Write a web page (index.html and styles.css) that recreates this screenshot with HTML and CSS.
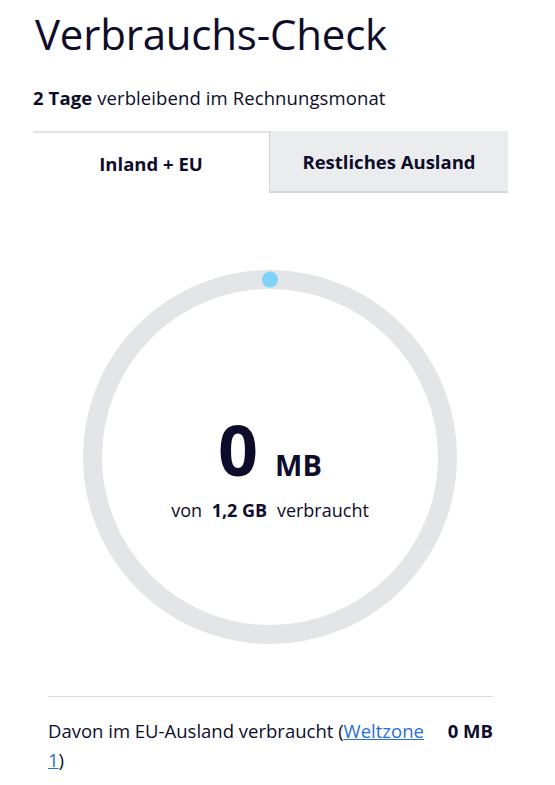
FILE: index.html
```html
<!DOCTYPE html>
<html lang="de">
<head>
<meta charset="utf-8">
<link rel="stylesheet" href="styles.css">
</head>
<body>
<main class="page">
  <h1 class="title">Verbrauchs-Check</h1>
  <p class="remaining"><strong>2 Tage</strong> verbleibend im Rechnungsmonat</p>
  <div class="tabs">
    <div class="tab tab-active">Inland + EU</div>
    <div class="tab tab-inactive">Restliches Ausland</div>
  </div>
  <div class="gauge">
    <svg class="ring" width="374" height="374" viewBox="0 0 374 374">
      <circle cx="187" cy="187" r="177.5" fill="none" stroke="#e4e5e7" stroke-width="19"/>
      <circle cx="187" cy="9.5" r="8" fill="#7dd3f7"/>
    </svg>
    <div class="gauge-text">
      <div class="amount"><span class="num">0</span><span class="unit">MB</span></div>
      <div class="of">von <strong>1,2 GB</strong> verbraucht</div>
    </div>
  </div>
  <div class="detail">
    <div class="detail-row">
      <span class="detail-label">Davon im EU-Ausland verbraucht (<a href="#">Weltzone 1</a>)</span>
      <strong class="detail-value">0 MB</strong>
    </div>
  </div>
</main>
</body>
</html>
```
FILE: styles.css
```css
* { box-sizing: border-box; }
body {
  margin: 0;
  background: #fff;
  color: #0d0d2b;
  font-family: "Open Sans", "Noto Sans", sans-serif;
}
.page {
  width: 475px;
  margin-left: 33px;
  padding-top: 8px;
}
.title {
  margin: 0 0 0 2px;
  font-size: 42px;
  font-weight: 400;
  line-height: 52px;
  letter-spacing: -0.2px;
}
.remaining {
  margin: 25px 0 0 0;
  font-size: 18.5px;
  line-height: 26px;
  letter-spacing: 0.1px;
}
.remaining strong { font-weight: 700; }
.tabs {
  margin-top: 20px;
  display: flex;
  height: 62px;
}
.tab {
  flex: 1;
  display: flex;
  align-items: center;
  justify-content: center;
  font-size: 18.5px;
  font-weight: 700;
}
.tab-active {
  border-top: 2px solid #e1e2e4;
  width: 236px;
  flex: none;
}
.tab-inactive {
  background: #ebecee;
  border-left: 1px solid #d6d7d9;
  border-bottom: 2px solid #d6d7d9;
}
.gauge {
  position: relative;
  margin: 77px 0 0 50px;
  width: 374px;
  height: 374px;
}
.ring { display: block; }
.gauge-text {
  position: absolute;
  inset: 0;
  display: flex;
  flex-direction: column;
  align-items: center;
  justify-content: center;
  padding-top: 22px;
}
.amount {
  display: flex;
  align-items: baseline;
  gap: 17px;
}
.num {
  font-size: 70px;
  font-weight: 700;
  line-height: 70px;
}
.unit {
  font-size: 29px;
  font-weight: 700;
}
.of {
  margin-top: 14px;
  font-size: 18px;
}
.of strong {
  font-weight: 700;
  margin: 0 5px;
}
.detail {
  margin: 52px 15px 0 15px;
  border-top: 1px solid #dcdcdc;
  padding-top: 19px;
}
.detail-row {
  display: flex;
  justify-content: space-between;
  align-items: flex-start;
  font-size: 18.5px;
  line-height: 29px;
}
.detail-label { width: 390px; }
.detail-label a { color: #2a6fd6; }
.detail-value { font-weight: 700; }
```
